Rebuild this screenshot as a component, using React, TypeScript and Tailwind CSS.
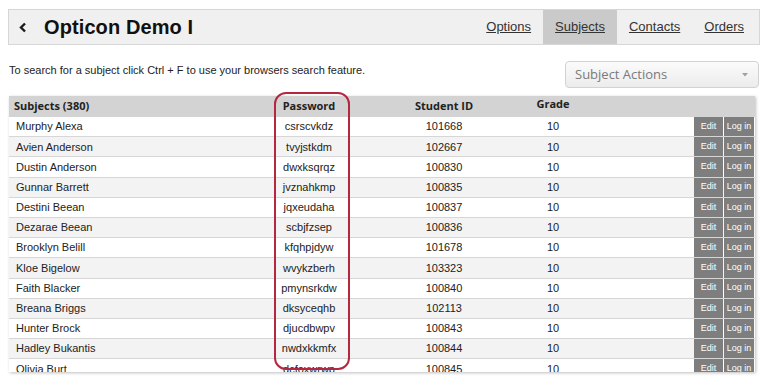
import React from "react";

const rows: [string, string, string][] = [
  ["Murphy Alexa", "csrscvkdz", "101668"],
  ["Avien Anderson", "tvyjstkdm", "102667"],
  ["Dustin Anderson", "dwxksqrqz", "100830"],
  ["Gunnar Barrett", "jvznahkmp", "100835"],
  ["Destini Beean", "jqxeudaha", "100837"],
  ["Dezarae Beean", "scbjfzsep", "100836"],
  ["Brooklyn Belill", "kfqhpjdyw", "101678"],
  ["Kloe Bigelow", "wvykzberh", "103323"],
  ["Faith Blacker", "pmynsrkdw", "100840"],
  ["Breana Briggs", "dksyceqhb", "102113"],
  ["Hunter Brock", "djucdbwpv", "100843"],
  ["Hadley Bukantis", "nwdxkkmfx", "100844"],
  ["Olivia Burt", "dcfoxwrwp", "100845"],
];

const arial = { fontFamily: '"Liberation Sans", Arial, sans-serif' };
const open = { fontFamily: '"Open Sans", "Liberation Sans", sans-serif' };

export default function App() {
  return (
    <div
      className="w-[768px] h-[386px] overflow-hidden bg-white pt-[9px] px-[8px] text-[#333]"
      style={arial}
    >
      {/* Header bar */}
      <div className="h-[36px] flex items-stretch border border-[#d6d6d6] bg-[#f0f0f0]">
        <div className="flex items-center pl-[10px] flex-1">
          <svg width="8" height="11" viewBox="0 0 8 11" className="mr-[17px]">
            <polyline points="6,1.5 2,5.5 6,9.5" fill="none" stroke="#1a1a1a" strokeWidth="2.4" />
          </svg>
          <span className="text-[20px] font-bold text-[#111] tracking-[0.1px]">Opticon Demo I</span>
        </div>
        <div className="flex items-stretch text-[13px] pr-[15px]">
          <a className="flex items-center underline px-[12px]">Options</a>
          <a className="flex items-center underline px-[12px] bg-[#cacaca]">Subjects</a>
          <a className="flex items-center underline pl-[12px] pr-[12px]">Contacts</a>
          <a className="flex items-center underline pl-[12px]">Orders</a>
        </div>
      </div>

      {/* Search hint + actions */}
      <div className="mt-[16px] flex justify-between items-start">
        <div className="text-[11px] mt-[1px] ml-[1px] text-[#222]">
          To search for a subject click Ctrl + F to use your browsers search feature.
        </div>
        <div
          className="w-[194px] h-[27px] mr-[1px] rounded-[4px] border border-[#d2d2d2] bg-gradient-to-b from-[#fbfbfb] to-[#ececec] flex items-center justify-between pl-[9px] pr-[10px] text-[13px] text-[#7a7a7a]"
          style={open}
        >
          <span>Subject Actions</span>
          <svg width="6" height="4" viewBox="0 0 6 4">
            <polygon points="0,0 6,0 3,3.5" fill="#a0a0a0" />
          </svg>
        </div>
      </div>

      {/* Table */}
      <div className="relative mt-[8px] ml-[1px] w-[746px] h-[276px]">
        <div className="h-full overflow-hidden shadow-[1px_1px_3px_rgba(0,0,0,0.25)]">
          <div
            className="h-[21px] flex items-center bg-[#d3d3d3] text-[11px] font-bold text-[#222]"
            style={open}
          >
            <div className="w-[260px] pl-[5px]">Subjects (380)</div>
            <div className="w-[80px] text-center">Password</div>
            <div className="w-[45px]" />
            <div className="w-[100px] text-center">Student ID</div>
            <div className="w-[29px]" />
            <div className="w-[60px] text-center -translate-y-[2px]">Grade</div>
          </div>
          {rows.map(([name, pw, id], i) => (
            <div
              key={name}
              className={`h-[20.2px] flex items-stretch border-b border-[#d6d6d6] text-[11px] text-[#222] ${
                i % 2 === 0 ? "bg-white" : "bg-[#f3f3f3]"
              }`}
            >
              <div className="w-[260px] pl-[7px] flex items-center">{name}</div>
              <div className="w-[80px] flex items-center justify-center">{pw}</div>
              <div className="w-[45px]" />
              <div className="w-[100px] flex items-center justify-center">{id}</div>
              <div className="w-[29px]" />
              <div className="w-[60px] flex items-center justify-center">10</div>
              <div className="w-[111px]" />
              <div className="w-[29px] bg-[#7e7e7e] text-white text-[9px] flex items-center justify-center">
                Edit
              </div>
              <div className="w-[1px]" />
              <div className="w-[30px] bg-[#7e7e7e] text-white text-[9px] flex items-center justify-center">
                Log in
              </div>
            </div>
          ))}
        </div>
        {/* Highlight outline */}
        <div className="absolute left-[265px] top-[-4px] w-[76px] h-[278px] border-2 border-[#b4283f] rounded-[12px] pointer-events-none" />
      </div>
    </div>
  );
}
